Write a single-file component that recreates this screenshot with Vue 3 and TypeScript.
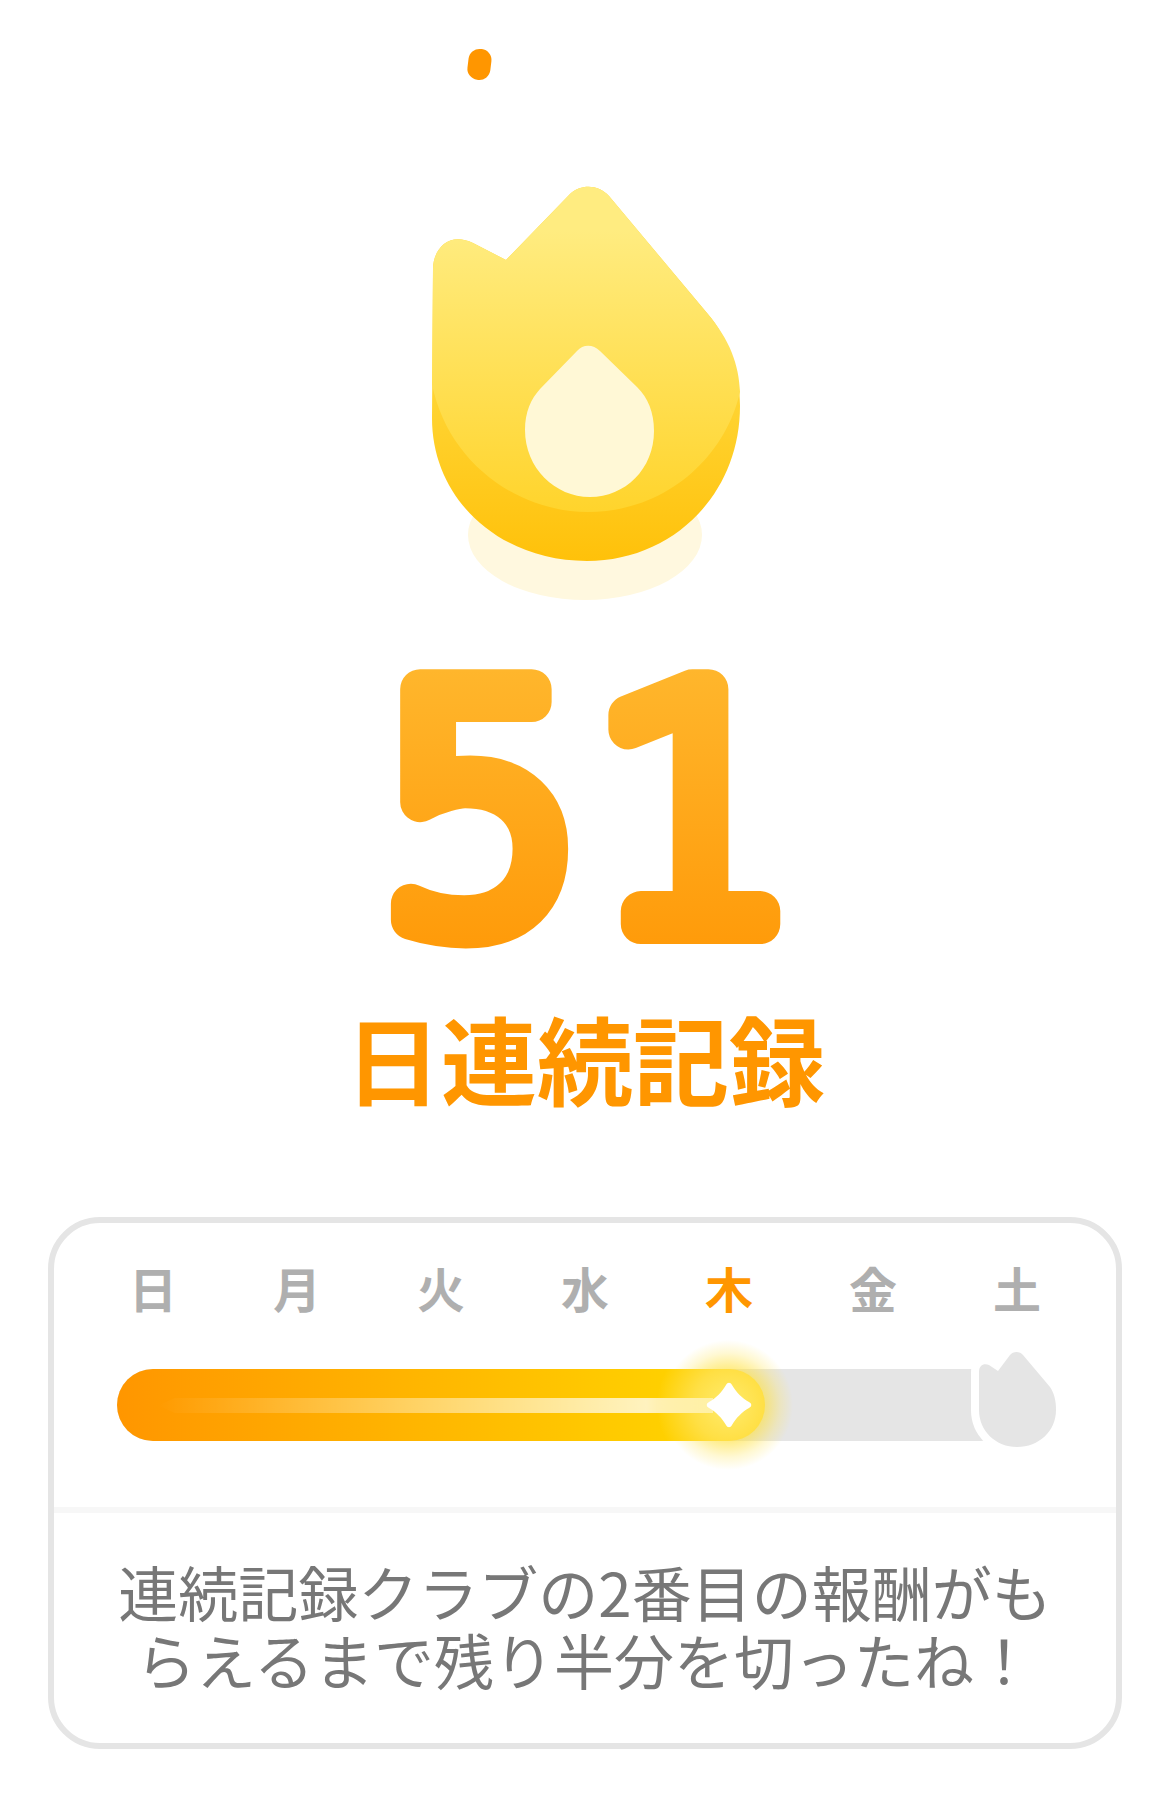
<template>
  <div class="page">
    <svg class="flame" viewBox="420 30 330 580" width="330" height="580">
      <defs>
        <linearGradient id="rim" gradientUnits="userSpaceOnUse" x1="0" y1="389" x2="0" y2="561">
          <stop offset="0" stop-color="#ffd535" />
          <stop offset="1" stop-color="#ffc10a" />
        </linearGradient>
        <linearGradient id="body" gradientUnits="userSpaceOnUse" x1="0" y1="230" x2="0" y2="512">
          <stop offset="0" stop-color="#ffec80" />
          <stop offset="1" stop-color="#ffd42c" />
        </linearGradient>
      </defs>
      <rect x="468" y="49" width="23" height="31" rx="11" fill="#ff9600" transform="rotate(7 480 64)" />
      <ellipse cx="585" cy="535" rx="117" ry="65" fill="#fff8df" />
      <path
        d="M433 269 C433 250 448 231 473 243 L506 260 L570 194 C581 184 598 184 609 196 L707 313 C730 340 740 372 740 406 C740 495 672 561 587 561 C500 561 432 500 432 418 Z"
        fill="url(#rim)"
      />
      <path
        d="M433 269 C433 250 448 231 473 243 L506 260 L570 194 C581 184 598 184 609 196 L707 313 C730 340 739 365 740 392 C725 458 665 512 588 512 C515 512 447 460 432 384 Z"
        fill="url(#body)"
      />
      <path
        d="M577 351 C583 344 593 344 600 351 L637 387 C648 398 654 412 654 431 C654 469 625 497 590 497 C555 497 525 468 525 430 C525 412 531 399 540 389 Z"
        fill="#fff8d6"
      />
    </svg>

    <svg class="count" viewBox="370 650 430 310" width="430" height="310">
      <defs>
        <linearGradient id="digits" gradientUnits="userSpaceOnUse" x1="0" y1="670" x2="0" y2="945">
          <stop offset="0" stop-color="#ffb62c" />
          <stop offset="1" stop-color="#ff9b0a" />
        </linearGradient>
      </defs>
      <text class="count-text" x="593" y="924" text-anchor="middle">{{ streak }}</text>
    </svg>

    <div class="title">日連続記録</div>

    <div class="card">
      <div class="week-section">
        <div class="week">
          <span v-for="(d, idx) in days" :key="d" class="day" :class="{ today: idx === todayIndex }">{{ d }}</span>
        </div>
        <div class="bar">
          <div class="track"></div>
          <div class="glow"></div>
          <div class="fill">
            <div class="streak-line"></div>
          </div>
          <svg class="star" viewBox="0 0 46 46" width="46" height="46">
            <path d="M20 3 C21.5 0 24.5 0 26 3 C30 10 36 16 43 20 C46 21.5 46 24.5 43 26 C36 30 30 36 26 43 C24.5 46 21.5 46 20 43 C16 36 10 30 3 26 C0 24.5 0 21.5 3 20 C10 16 16 10 20 3 Z" fill="#fff" />
          </svg>
          <svg class="goal" viewBox="0 0 93 111" width="93" height="111">
            <path
              d="M8 28 C8 21 13 19 18 21 L27 27 L39 11 C42 7 49 7 52 11 L79 43 C83 49 85 56 85 66 C85 87 68 103 46 103 C25 103 8 87 8 66 Z"
              fill="#e5e5e5"
              stroke="#fff"
              stroke-width="16"
              paint-order="stroke"
            />
          </svg>
        </div>
      </div>
      <p class="message">連続記録クラブの2番目の報酬がもらえるまで残り半分を切ったね！</p>
    </div>
  </div>
</template>

<script setup lang="ts">
const streak = 51;
const days = ['日', '月', '火', '水', '木', '金', '土'];
const todayIndex = 4;
</script>

<style>
body {
  background: #fff;
}
</style>

<style scoped>
.page {
  width: 1170px;
  height: 1813px;
  display: flex;
  flex-direction: column;
  align-items: center;
  padding-top: 30px;
  box-sizing: border-box;
  background: #fff;
  font-family: "Noto Sans CJK JP", "Liberation Sans", sans-serif;
  overflow: hidden;
}

.flame,
.count {
  display: block;
  flex: none;
}

.count {
  margin-top: 40px;
  overflow: visible;
}

.count-text {
  font-family: "DejaVu Sans", sans-serif;
  font-weight: 200;
  font-size: 322px;
  letter-spacing: 9px;
  fill: url(#digits);
  stroke: url(#digits);
  stroke-width: 40px;
  stroke-linejoin: round;
  stroke-linecap: round;
}

.title {
  margin-top: 42px;
  font-size: 96px;
  font-weight: 700;
  line-height: 110px;
  color: #ff9600;
}

.card {
  margin-top: 105px;
  width: 1074px;
  box-sizing: border-box;
  border: 6px solid #e5e5e5;
  border-radius: 52px;
  background: #fff;
}

.week-section {
  padding: 34px 27px 66px;
  border-bottom: 6px solid #f7f7f7;
}

.week {
  display: grid;
  grid-template-columns: repeat(7, 144px);
}

.day {
  text-align: center;
  font-size: 48px;
  font-weight: 700;
  line-height: 60px;
  color: #afafaf;
}

.day.today {
  color: #ff9600;
}

.bar {
  position: relative;
  height: 72px;
  margin: 52px 0 0 36px;
}

.track {
  position: absolute;
  left: 0;
  top: 0;
  width: 900px;
  height: 72px;
  border-radius: 36px;
  background: #e5e5e5;
}

.fill {
  position: absolute;
  left: 0;
  top: 0;
  width: 648px;
  height: 72px;
  border-radius: 36px;
  background:
    radial-gradient(circle 72px at 612px 36px, #ffeb6e 0%, rgba(255, 226, 80, 0.85) 50%, rgba(255, 208, 0, 0) 100%),
    linear-gradient(90deg, #ff9600 0%, #ffd000 85%, #ffd000 100%);
}

.streak-line {
  position: absolute;
  left: 41px;
  top: 29px;
  width: 555px;
  height: 15px;
  background: linear-gradient(90deg, rgba(255, 255, 255, 0) 0%, rgba(255, 255, 255, 0.75) 88%, rgba(255, 255, 255, 0.45) 100%);
  clip-path: polygon(0 50%, 3% 0, 100% 0, 100% 100%, 3% 100%);
}

.glow {
  position: absolute;
  left: 546px;
  top: -29px;
  width: 130px;
  height: 130px;
  border-radius: 50%;
  background: radial-gradient(circle closest-side, rgba(255, 225, 60, 0.85) 0%, rgba(255, 225, 60, 0.62) 55%, rgba(255, 228, 80, 0.25) 80%, rgba(255, 228, 80, 0) 100%);
}

.star {
  position: absolute;
  left: 589px;
  top: 13px;
}

.goal {
  position: absolute;
  left: 854px;
  top: -25px;
}

.message {
  margin: 0;
  padding: 44px 54px 50px;
  font-size: 60px;
  line-height: 68px;
  font-weight: 400;
  color: #777;
  text-align: center;
}
</style>
